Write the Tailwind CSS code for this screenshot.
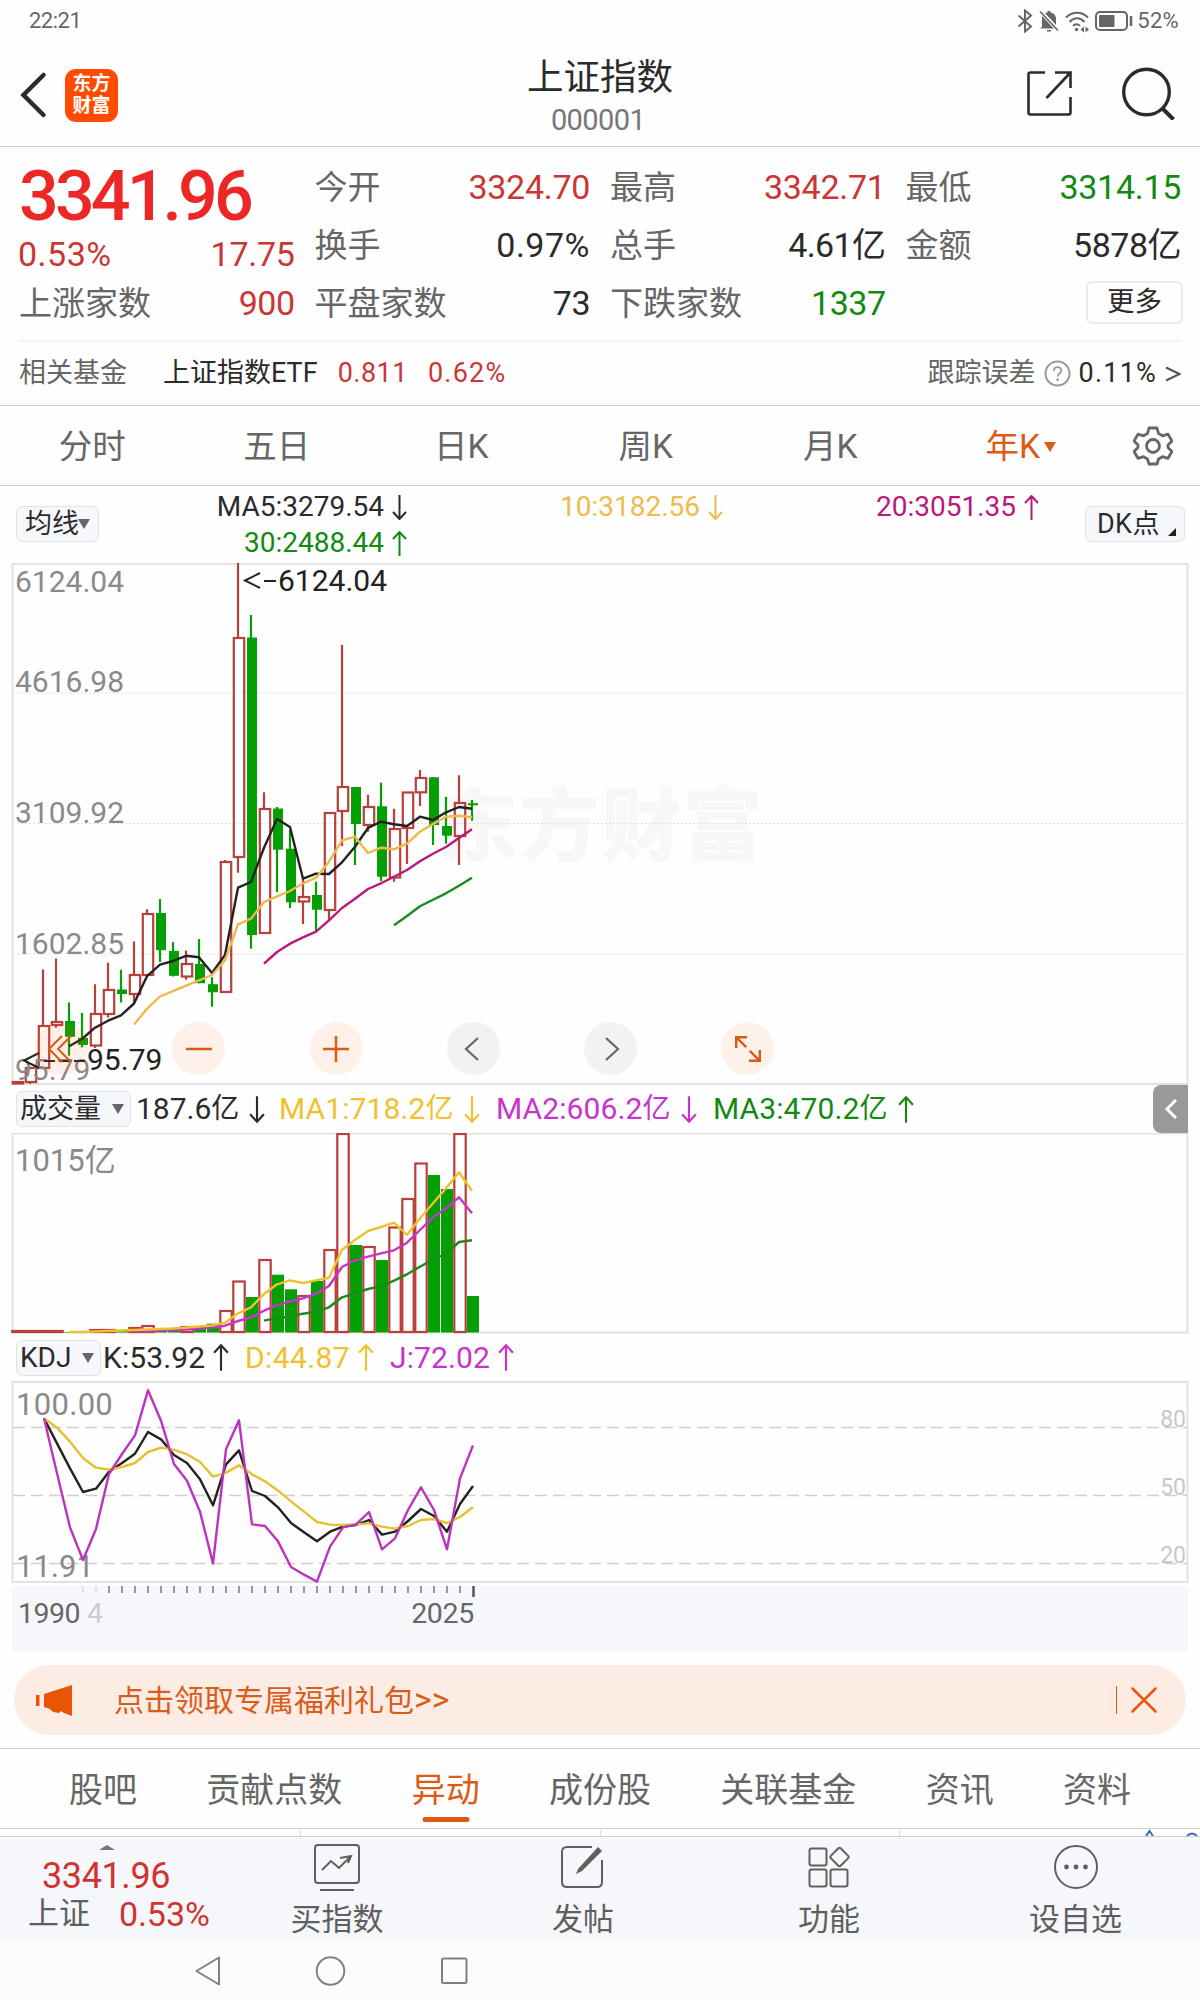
<!DOCTYPE html>
<html lang="zh-CN">
<head>
    <meta charset="UTF-8">
    <meta name="viewport" content="width=device-width, initial-scale=1.0">
    <title>上证指数 000001</title>
    <!-- Tailwind CSS -->
    <script src="https://cdn.jsdelivr.net/npm/@tailwindcss/browser@4"></script>
</head>
<body class="w-[1200px] h-[2000px] overflow-hidden bg-[#fefefe] font-[Roboto,'Noto_Sans_CJK_SC',sans-serif] text-[#2b2b2b] leading-none">

    <!-- Status bar -->
    <div class="flex h-[42px] items-center justify-between pl-[29px] pr-[21px] text-[22px] text-[#666]">
        <span class="tracking-[-0.5px]">22:21</span>
        <div class="flex items-center">
            <svg class="mr-1.5 h-6 w-4" viewBox="0 0 16 24" fill="none" stroke="#666" stroke-width="2"><path d="M1.500 6.500 14 17.500 8 22.500V1.500L14 6.500 1.500 17.500"/></svg>
            <svg class="mr-1.5 h-6 w-5" viewBox="0 0 20 24"><path d="M3 18V10c0-4 2.500-6 5.500-6.500V2h3v1.500C14.500 4 17 6 17 10v8l2 1.500H1z" fill="#666"/><path d="M8 21h4v1.500H8z" fill="#666"/><path d="M1 2 20 22" stroke="#fefefe" stroke-width="4"/><path d="M1 2.500 19 21.500" stroke="#666" stroke-width="1.600"/></svg>
            <svg class="mr-1.5 h-6 w-6" viewBox="0 0 24 24" fill="none" stroke="#666" stroke-width="2"><path d="M1 8.500c6-6.500 16-6.500 22 0M4.500 13c4.500-5 10.500-5 15 0M8 17c2-2.500 5-2.500 7 0"/><circle cx="11.500" cy="20.500" r="1.700" fill="#666" stroke="none"/><path d="M15.500 20.500l3.500-3v6zM24 20.500l-3.500-3v6z" fill="#666" stroke="none"/></svg>
            <svg class="mr-1 h-[22px] w-[38px]" viewBox="0 0 38 22"><rect x="1" y="2" width="31" height="18" rx="4" fill="none" stroke="#666" stroke-width="2"/><rect x="4" y="5" width="15.500" height="12" rx="1" fill="#666"/><path d="M36 6v10" stroke="#666" stroke-width="2.500"/></svg>
            <span class="tracking-[0.3px]">52%</span>
        </div>
    </div>

    <!-- Header -->
    <div class="flex h-[105px] items-center border-b border-[#cfcfcf] px-5">
        <div class="flex w-[400px] items-center pt-0.5">
            <svg class="h-[50px] w-[27px]" viewBox="0 0 27 50" fill="none" stroke="#2b2b2b" stroke-width="4.500" stroke-linecap="round"><path d="M23.500 5 3.500 25l20 20"/></svg>
            <div class="ml-[18px] flex h-[53px] w-[53px] flex-col items-center justify-center rounded-[11px] bg-[#ff4a00] text-[19px] font-bold leading-[22px] text-white">
                <span>东方</span>
                <span>财富</span>
            </div>
        </div>
        <div class="flex flex-1 flex-col items-center pt-1">
            <h1 class="text-[36.5px] leading-[48px]">上证指数</h1>
            <p class="-translate-x-0.5 leading-[36px] text-[29px] tracking-[-0.6px] text-[#777]">000001</p>
        </div>
        <div class="flex w-[400px] items-center justify-end pb-0.5 pr-[5px]">
            <svg class="mr-[48px] h-[47px] w-[47px]" viewBox="0 0 47 47" fill="none" stroke="#2b2b2b" stroke-width="2.600"><path d="M19 2.500H4.500q-2 0-2 2v38q0 2 2 2h38q2 0 2-2V27M29 2.500h15.500V18M44.500 2.500 20.500 28"/></svg>
            <svg class="h-[54px] w-[54px]" viewBox="0 0 54 54" fill="none" stroke="#2b2b2b" stroke-width="3.400"><circle cx="25.500" cy="26" r="22.800"/><path d="M41.500 42.500l11 11" stroke-width="4"/></svg>
        </div>
    </div>

    <!-- Quote summary -->
    <div class="px-[19px] pt-[11px]">
        <div class="grid grid-cols-4 gap-x-5 text-[33px]">
            <div>
                <div class="flex h-[74px] items-center pt-px text-[70px] font-medium tracking-[-3.900px] text-[#ec2726]">3341.96</div>
                <div class="flex h-[42px] items-center justify-between pt-0.5 text-[34px] text-[#cb3634]"><span class="-ml-px tracking-[0.500px]">0.53%</span><span class="tracking-[-0.300px]">17.75</span></div>
                <div class="flex h-[58px] items-center justify-between"><span class="text-[#666]">上涨家数</span><span class="text-[34px] tracking-[-0.500px] text-[#cb3634]">900</span></div>
            </div>
            <div>
                <div class="flex h-[58px] items-center justify-between"><span class="text-[#666]">今开</span><span class="text-[34px] tracking-[-0.3px] text-[#cb3634]">3324.70</span></div>
                <div class="flex h-[58px] items-center justify-between"><span class="text-[#666]">换手</span><span class="text-[34px] tracking-[0.500px]">0.97%</span></div>
                <div class="flex h-[58px] items-center justify-between"><span class="text-[#666]">平盘家数</span><span class="text-[34px] tracking-[-0.500px]">73</span></div>
            </div>
            <div>
                <div class="flex h-[58px] items-center justify-between"><span class="text-[#666]">最高</span><span class="text-[34px] tracking-[-0.3px] text-[#cb3634]">3342.71</span></div>
                <div class="flex h-[58px] items-center justify-between"><span class="text-[#666]">总手</span><span class="text-[34px] tracking-[-0.6px]">4.61亿</span></div>
                <div class="flex h-[58px] items-center justify-between"><span class="text-[#666]">下跌家数</span><span class="text-[34px] tracking-[-0.500px] text-[#118a11]">1337</span></div>
            </div>
            <div>
                <div class="flex h-[58px] items-center justify-between"><span class="text-[#666]">最低</span><span class="text-[34px] tracking-[-0.3px] text-[#118a11]">3314.15</span></div>
                <div class="flex h-[58px] items-center justify-between"><span class="text-[#666]">金额</span><span class="text-[34px] tracking-[-0.500px]">5878亿</span></div>
                <div class="flex h-[58px] items-center justify-end"><button class="-mr-0.5 -mt-0.5 h-[43px] w-[97px] rounded-md border-2 border-[#ebebeb] text-[27.500px] leading-none">更多</button></div>
            </div>
        </div>
        <div class="mt-2 flex h-[65px] items-center border-t-2 border-[#f3f3f3] text-[27px]">
            <span class="text-[#666]">相关基金</span>
            <span class="ml-9">上证指数ETF</span>
            <span class="ml-5 tracking-[0.500px] text-[#cb3634]">0.811</span>
            <span class="ml-5 tracking-[1.200px] text-[#cb3634]">0.62%</span>
            <span class="ml-auto text-[#666]">跟踪误差</span>
            <svg class="ml-2 h-[27px] w-[27px]" viewBox="0 0 27 27"><circle cx="13.500" cy="13.500" r="12" fill="none" stroke="#999" stroke-width="2"/><path d="M9.800 11c0-5 7.600-5 7.600-.5 0 3-3.700 2.700-3.700 6" fill="none" stroke="#999" stroke-width="1.800"/><circle cx="13.700" cy="19.800" r="1.300" fill="#999"/></svg>
            <span class="ml-2 tracking-[1.200px]">0.11%</span>
            <svg class="ml-2 h-4 w-4" viewBox="0 0 16 16" fill="none" stroke="#555" stroke-width="2"><path d="M1 1.500 14.500 8 1 14.500"/></svg>
        </div>
    </div>

    <!-- Period tabs -->
    <div class="flex h-[81px] items-center border-y border-[#cfcfcf] pt-0.5 text-[33.5px] text-[#666]">
        <span class="w-[184.5px] text-center">分时</span>
        <span class="w-[184.5px] text-center">五日</span>
        <span class="w-[184.5px] text-center">日K</span>
        <span class="w-[184.5px] text-center">周K</span>
        <span class="w-[184.5px] text-center">月K</span>
        <span class="flex w-[184.5px] items-center justify-center pl-3 text-[#dd5a12]">年K<svg class="ml-1 h-3 w-3" viewBox="0 0 12 12"><path d="M0 1h12L6 11z" fill="#dd5a12"/></svg></span>
        <div class="-mt-0.5 flex flex-1 justify-center pr-0.5">
            <svg class="h-10 w-10" viewBox="0 0 40 40" fill="none" stroke="#666" stroke-width="2.800" stroke-linejoin="round"><path d="M16 2h8l1.500 5.500 4 2.300 5.500-1.600 4 6.800-4 4v2.500l4 4-4 6.800-5.500-1.600-4 2.300L24 38h-8l-1.500-5-4-2.300L5 32.300l-4-6.800 4-4V19l-4-4 4-6.800 5.500 1.600 4-2.300z"/><circle cx="20" cy="20" r="6.500"/></svg>
        </div>
    </div>

    <!-- Moving average legend -->
    <div class="flex h-[77px] pl-4 text-[28px]">
        <button class="mt-5 flex h-9 w-[83px] items-center justify-center rounded-md border border-[#dfe3e8] bg-[#f6f7fb] text-[27px]">均线<svg class="-ml-px h-[10px] w-3" viewBox="0 0 12 10"><path d="M0 0h12L6 10z" fill="#666"/></svg></button>
        <div class="grid grid-cols-[308px_316px_316px] content-start justify-items-end pt-[3px]">
            <span class="flex h-9 items-center">MA5:3279.54<svg class="ml-2 h-[25px] w-[15px]" viewBox="0 0 15 25" fill="none" stroke="currentColor" stroke-width="2"><path d="M7.500 0v24M1 17l6.500 7 6.500-7"/></svg></span>
            <span class="flex h-9 items-center text-[#eebb4d]">10:3182.56<svg class="ml-2 h-[25px] w-[15px]" viewBox="0 0 15 25" fill="none" stroke="currentColor" stroke-width="2"><path d="M7.500 0v24M1 17l6.500 7 6.500-7"/></svg></span>
            <span class="flex h-9 items-center text-[#b8197a]">20:3051.35<svg class="ml-2 h-[25px] w-[15px]" viewBox="0 0 15 25" fill="none" stroke="currentColor" stroke-width="2"><path d="M7.500 25V1M1 8l6.500-7L14 8"/></svg></span>
            <span class="flex h-9 items-center text-[#118a11]">30:2488.44<svg class="ml-2 h-[25px] w-[15px]" viewBox="0 0 15 25" fill="none" stroke="currentColor" stroke-width="2"><path d="M7.500 25V1M1 8l6.500-7L14 8"/></svg></span>
        </div>
        <button class="ml-auto mr-[15px] mt-5 flex h-9 w-[100px] items-center rounded-md border border-[#dfe3e8] bg-[#f6f7fb] pl-[11px] text-[27px]"><span class="tracking-[0.400px]">DK点</span><svg class="ml-2 mt-4 h-2 w-2" viewBox="0 0 8 8"><path d="M8 0v8H0z" fill="#222"/></svg></button>
    </div>

    <!-- Candlestick chart -->
    <div class="relative h-[522px]">
        <svg id="kline" class="block h-full w-full" viewBox="0 563 1200 522"></svg>
        <div class="absolute left-[35px] top-[459px] flex gap-[84.3px]">
            <span class="flex size-[53px] items-center justify-center rounded-full bg-[#fd7a30]/10"><svg class="-ml-1 size-7" viewBox="0 0 28 28" fill="none" stroke="#dd5a12" stroke-width="2"><path d="M16 1 3 14l13 13M25 1 12 14l13 13"/></svg></span>
            <span class="flex size-[53px] items-center justify-center rounded-full bg-[#fef1ea]"><svg class="size-[26px]" viewBox="0 0 26 26" stroke="#dd5a12" stroke-width="2.500"><path d="M0 13h26"/></svg></span>
            <span class="flex size-[53px] items-center justify-center rounded-full bg-[#fef1ea]"><svg class="size-[26px]" viewBox="0 0 26 26" stroke="#dd5a12" stroke-width="2.500"><path d="M0 13h26M13 0v26"/></svg></span>
            <span class="flex size-[53px] items-center justify-center rounded-full bg-[#f2f2f2]"><svg class="-ml-0.5 size-6" viewBox="0 0 24 24" fill="none" stroke="#666" stroke-width="2.200"><path d="M18 1 6 12l12 11"/></svg></span>
            <span class="flex size-[53px] items-center justify-center rounded-full bg-[#f2f2f2]"><svg class="ml-0.5 size-6" viewBox="0 0 24 24" fill="none" stroke="#666" stroke-width="2.200"><path d="M6 1 18 12 6 23"/></svg></span>
            <span class="flex size-[53px] items-center justify-center rounded-full bg-[#fef1ea]"><svg class="size-[26px]" viewBox="0 0 26 26" fill="none" stroke="#dd5a12" stroke-width="2.400"><path d="M12 1.200H1.200V12M1.200 1.200l10 10M14 24.800h10.800V14M24.800 24.800l-10-10"/></svg></span>
        </div>
    </div>

    <!-- Volume legend -->
    <div class="flex h-[48px] items-center pl-4 text-[30px]">
        <button class="flex h-9 w-[115px] items-center rounded-md border border-[#dfe3e8] bg-[#f6f7fb] pl-[3px] text-[27px]">成交量<svg class="ml-[11px] h-[10px] w-3" viewBox="0 0 12 10"><path d="M0 0h12L6 10z" fill="#666"/></svg></button>
        <span class="ml-[5px] flex w-[143px] items-center">187.6<span class="text-[28px]">亿</span><svg class="ml-2.5 h-[27px] w-4" viewBox="0 0 15 25" fill="none" stroke="currentColor" stroke-width="2"><path d="M7.500 0v24M1 17l6.500 7 6.500-7"/></svg></span>
        <span class="flex w-[217px] items-center tracking-[0.100px] text-[#efc12e]">MA1:718.2<span class="text-[28px]">亿</span><svg class="ml-2.5 h-[27px] w-4" viewBox="0 0 15 25" fill="none" stroke="currentColor" stroke-width="2"><path d="M7.500 0v24M1 17l6.500 7 6.500-7"/></svg></span>
        <span class="flex w-[217px] items-center tracking-[0.100px] text-[#c733cb]">MA2:606.2<span class="text-[28px]">亿</span><svg class="ml-2.5 h-[27px] w-4" viewBox="0 0 15 25" fill="none" stroke="currentColor" stroke-width="2"><path d="M7.500 0v24M1 17l6.500 7 6.500-7"/></svg></span>
        <span class="flex items-center tracking-[0.100px] text-[#118a11]">MA3:470.2<span class="text-[28px]">亿</span><svg class="ml-2.5 h-[27px] w-4" viewBox="0 0 15 25" fill="none" stroke="currentColor" stroke-width="2"><path d="M7.500 25V1M1 8l6.500-7L14 8"/></svg></span>
        <span class="ml-auto mr-3 flex h-[48px] w-[35px] items-center justify-center rounded-l-lg bg-[#999]"><svg class="h-5 w-3" viewBox="0 0 12 20" fill="none" stroke="#fff" stroke-width="3"><path d="M11 1 2 10l9 9"/></svg></span>
    </div>

    <!-- Volume chart -->
    <svg id="volume" class="block h-[201px] w-full" viewBox="0 1133 1200 201"></svg>

    <!-- KDJ legend -->
    <div class="flex h-[47px] items-center pl-4 text-[30px]">
        <button class="flex h-9 w-[85px] items-center rounded-md border border-[#dfe3e8] bg-[#f6f7fb] pl-[3px] text-[28px]">KDJ<svg class="ml-[11px] h-[10px] w-3" viewBox="0 0 12 10"><path d="M0 0h12L6 10z" fill="#666"/></svg></button>
        <span class="ml-0.5 flex w-[142px] items-center tracking-[0.100px]">K:53.92<svg class="ml-2 h-[27px] w-4" viewBox="0 0 15 25" fill="none" stroke="currentColor" stroke-width="2"><path d="M7.500 25V1M1 8l6.500-7L14 8"/></svg></span>
        <span class="flex w-[145px] items-center tracking-[0.400px] text-[#efc12e]">D:44.87<svg class="ml-2 h-[27px] w-4" viewBox="0 0 15 25" fill="none" stroke="currentColor" stroke-width="2"><path d="M7.500 25V1M1 8l6.500-7L14 8"/></svg></span>
        <span class="flex items-center tracking-[0.100px] text-[#c733cb]">J:72.02<svg class="ml-2 h-[27px] w-4" viewBox="0 0 15 25" fill="none" stroke="currentColor" stroke-width="2"><path d="M7.500 25V1M1 8l6.500-7L14 8"/></svg></span>
    </div>

    <!-- KDJ chart and year axis -->
    <svg id="kdj" class="block h-[270px] w-full" viewBox="0 1381 1200 270"></svg>

    <!-- Promo banner -->
    <div class="mx-3.5 mt-3.5 flex h-[70px] items-center rounded-[36px] bg-[#fcece3] pl-[22px] pr-[29px] text-[30px] text-[#d95c1a]">
        <svg class="h-[31px] w-9" viewBox="0 0 36 31" fill="#e95504"><path d="M0 10h3.500v11H0zM8 9 36 0v31l-8-3-3-2-2 2-6-1-3-3-6-2z"/></svg>
        <span class="ml-[42px] -mt-0.5">点击领取专属福利礼包<span class="text-[34px] leading-none">&gt;&gt;</span></span>
        <span class="ml-auto h-7 w-px bg-[#c9611f]"></span>
        <svg class="ml-3.5 h-[26px] w-[26px]" viewBox="0 0 26 26" stroke="#dd5a12" stroke-width="2.500" stroke-linecap="round"><path d="M1.500 1.500l23 23M24.500 1.500l-23 23"/></svg>
    </div>

    <!-- Content tabs -->
    <div class="mt-[13px] flex h-[81px] items-center justify-between border-y border-[#cfcfcf] px-[69px] pt-0.5 text-[34px] text-[#666]">
        <span>股吧</span>
        <span>贡献点数</span>
        <span class="relative text-[#dd5a12]">异动<i class="absolute -bottom-[15px] left-1/2 h-[5px] w-[47px] -translate-x-1/2 rounded-full bg-[#dd5a12]"></i></span>
        <span>成份股</span>
        <span>关联基金</span>
        <span>资讯</span>
        <span>资料</span>
    </div>
    <svg class="block h-[7px] w-full" viewBox="0 0 1200 7" fill="none"><path d="M300.500 2v5M600.500 2v5M899.500 2v5" stroke="#ccc" stroke-dasharray="2 1.500"/><path d="M1146 7l3.500-5 3.500 5M1187 7q5-5 10 0" stroke="#3c6fae" stroke-width="2"/></svg>

    <!-- Bottom toolbar -->
    <div class="flex h-[106px] border-t border-[#cfcfcf] bg-[#f6f7fb] text-[31px] text-[#5f5f5f]">
        <div class="w-[214px]">
            <svg class="ml-[99px] mt-2 h-[5px] w-4" viewBox="0 0 16 5"><path d="M0 5 8 0l8 5z" fill="#777"/></svg>
            <p class="ml-[42px] mt-2 text-[36px] leading-[36px] tracking-[-0.400px] text-[#d13232]">3341.96</p>
            <p class="ml-[28px] mt-0.5 flex items-center leading-[36px]">上证<span class="ml-[29px] text-[34px] tracking-[-0.100px] text-[#d13232]">0.53%</span></p>
        </div>
        <div class="flex w-[246px] flex-col items-center pt-[7px]">
            <svg class="h-[48px] w-[48px]" viewBox="0 0 48 48" fill="none" stroke="#5f5f5f" stroke-width="2"><rect x="2" y="1" width="44" height="38" rx="3"/><path d="M7 46h34M9 26l9-9 8 7 11-11M27 14l11-2-3 7"/></svg>
            <span class="mt-3">买指数</span>
        </div>
        <div class="flex w-[246px] flex-col items-center pt-[7px]">
            <svg class="h-[48px] w-[48px]" viewBox="0 0 48 48" fill="none" stroke="#5f5f5f" stroke-width="2"><path d="M33 3H8q-5 0-5 5v30q0 5 5 5h30q5 0 5-5V16"/><path d="M17 30l2-5L39 3l4 4-20 20z" fill="#5f5f5f" stroke="none"/></svg>
            <span class="mt-3">发帖</span>
        </div>
        <div class="flex w-[246px] flex-col items-center pt-[7px]">
            <svg class="h-[48px] w-[48px]" viewBox="0 0 48 48" fill="none" stroke="#5f5f5f" stroke-width="2"><rect x="4.500" y="4.500" width="17" height="17" rx="2"/><rect x="4.500" y="25.500" width="17" height="17" rx="2"/><rect x="25.500" y="25.500" width="17" height="17" rx="2"/><rect x="27.500" y="6" width="14" height="14" rx="2" transform="rotate(45 34.500 13)"/></svg>
            <span class="mt-3">功能</span>
        </div>
        <div class="flex w-[247px] flex-col items-center pt-[7px]">
            <svg class="h-[48px] w-[48px]" viewBox="0 0 48 48" fill="none" stroke="#5f5f5f" stroke-width="2"><circle cx="24" cy="23" r="21"/><g fill="#5f5f5f" stroke="none"><circle cx="14.500" cy="23" r="2.400"/><circle cx="24" cy="23" r="2.400"/><circle cx="33.500" cy="23" r="2.400"/></g></svg>
            <span class="mt-3">设自选</span>
        </div>
    </div>

    <!-- System navigation -->
    <div class="flex h-[58px] items-center bg-[#fcfcfc] pl-[195px]">
        <svg class="h-[30px] w-[273px]" viewBox="0 0 273 30" fill="none" stroke="#808080" stroke-width="2"><path d="M24 1.500v27L1.500 15z" stroke-linejoin="round"/><circle cx="135.500" cy="15" r="13.800"/><rect x="247" y="2.500" width="24.500" height="24.500" rx="1.500"/></svg>
    </div>

    <script>
        const RED = '#b8403a', GREEN = '#049f04', BLACK = '#222', STEP = 13, X0 = 17;
        const x = i => X0 + i * STEP;

        // [up/down, high, body top, body bottom, low]
        const candles = [
            ['r', 1082, 1082, 1083.5, 1083.5], ['r', 1068, 1068, 1082, 1084], ['r', 969.5, 1026, 1068, 1068],
            ['r', 958.6, 1022, 1025, 1027.7], ['g', 1002.5, 1021, 1036.8, 1055.8], ['g', 1013, 1037.9, 1044.9, 1047.4],
            ['r', 984.2, 1014, 1045.5, 1048], ['r', 962.8, 990, 1014, 1017.5], ['g', 969.8, 989.5, 994, 1002.5],
            ['r', 941.4, 975, 994, 1002.5], ['r', 909.2, 914, 975, 975], ['g', 899, 913, 950.2, 962.1],
            ['g', 942.1, 950.9, 975.8, 976.5], ['r', 950.6, 964, 976.5, 979.7], ['g', 939, 963.9, 983.2, 983.2],
            ['g', 977.2, 984.2, 992.3, 1006.7], ['r', 860, 862, 992, 992], ['r', 563, 638, 857, 872.7],
            ['g', 615, 637.5, 935, 948.8], ['r', 792.3, 809, 933, 933], ['g', 807, 808.5, 849.7, 892],
            ['g', 830, 848.7, 902.3, 908], ['r', 878.3, 897, 901.5, 924], ['g', 881.7, 895, 909.7, 931.7],
            ['r', 813, 813, 910, 920.7], ['r', 645, 787, 811, 846], ['g', 787, 787, 824, 865],
            ['r', 794.7, 807, 825, 831.7], ['g', 782.7, 806.3, 876.7, 881], ['r', 808.7, 829, 877.5, 881.7],
            ['r', 792.3, 792.5, 828, 864], ['r', 770, 778, 792.3, 806], ['g', 777, 777.3, 825, 845],
            ['g', 797, 826, 835.7, 843.7], ['r', 775.3, 803, 836, 865], ['g', 800, 803.2, 805.2, 820.7]
        ];
        const ma5 = [1046.3, 1039, 1027.7, 1020.7, 1015.4, 1003.5, 976.2, 964.6, 961, 955.8, 957.2, 973, 955, 887.7, 882, 847.7, 819, 827, 878.7, 873.7, 874, 862.3, 846.7, 828, 821.7, 824.3, 826, 816.7, 820, 812.3, 807, 808.7];
        const ma10 = [1024.6, 1008.8, 996.5, 991.2, 985.6, 980.4, 975, 960.4, 924.3, 918.7, 902, 896.3, 891, 883.3, 877.7, 861.7, 840.3, 836.7, 853, 847.7, 849.3, 843.7, 831.7, 824, 816.7, 815.7, 817.3];
        const ma20 = [963.7, 952, 943.7, 937.3, 931.7, 920.3, 908, 898.7, 889, 883.3, 876.7, 870, 861.3, 853.7, 847, 838, 829.3];
        const ma30 = [925.3, 916, 906.3, 899.7, 893.3, 885.7, 877.7];

        const volTops = [1331, 1331, 1331, 1331, 1332, 1332, 1330, 1330, 1331, 1328, 1326, 1328, 1329, 1327, 1326, 1323.7, 1311, 1281.5, 1297, 1260, 1274.7, 1289.3, 1296, 1281, 1250, 1134, 1245, 1247, 1260, 1227.5, 1199, 1163.5, 1175, 1189, 1134, 1296];
        const vol5 = [1332, 1332, 1331.5, 1331, 1330.5, 1330, 1329.5, 1329, 1328.5, 1327.5, 1326.5, 1325.5, 1322.7, 1313.3, 1307.3, 1294, 1284.3, 1280.3, 1283, 1280.3, 1277.7, 1249.7, 1240, 1231, 1227, 1222.7, 1235, 1218.3, 1203.3, 1188.3, 1172.3, 1190.7];
        const vol10 = [1331, 1331, 1330.5, 1330, 1329.5, 1328.5, 1327.5, 1325.7, 1321, 1317.3, 1310.7, 1305.3, 1301.7, 1298.3, 1293.7, 1286, 1267, 1260.3, 1256.7, 1253.3, 1250.3, 1242.7, 1230, 1217.3, 1208.3, 1197.3, 1213.3];
        const vol20 = [1320.7, 1318, 1316.7, 1313.7, 1311.7, 1307.3, 1297.3, 1293.3, 1289, 1286.3, 1280.7, 1274.3, 1266.7, 1259.3, 1254, 1242, 1240.3];

        const k = [265, 340, 415, 486, 476, 425, 399, 371, 306, 328, 375, 399, 448, 526, 403, 361, 483, 498, 532, 579, 607, 634, 605, 590, 585, 570, 614, 605, 573, 537, 558, 605, 522, 468];
        const d = [265, 293, 335, 384, 413, 419, 411, 399, 366, 353, 359, 373, 396, 440, 428, 406, 433, 454, 482, 514, 545, 576, 584, 585, 583, 580, 590, 596, 588, 570, 567, 579, 561, 531];
        const j = [265, 430, 592, 690, 597, 432, 372, 316, 181, 272, 402, 452, 545, 700, 358, 271, 583, 588, 634, 711, 734, 755, 650, 592, 583, 546, 658, 625, 540, 472, 540, 658, 445, 346];

        // Series are right-aligned: the last value always belongs to 2025
        const line = (ys, color, dx = 0) =>
            `<polyline fill="none" stroke="${color}" stroke-width="2.4" stroke-linejoin="round" points="${ys.map((y, i) => `${x(36 - ys.length + i) + dx},${y}`).join(' ')}"/>`;
        const text = (tx, ty, s, color, size = 30, extra = '') =>
            `<text x="${tx}" y="${ty}" fill="${color}" font-size="${size}" ${extra}>${s}</text>`;
        const frame = (top, bottom) =>
            `<rect x="12.5" y="${top}" width="1175" height="${bottom - top}" fill="none" stroke="#e2e2e2" stroke-width="2"/>`;

        // K-line panel
        let out = text(438, 854, '东方财富', '#f7f7f7', 80, 'font-weight="900" letter-spacing="1.5"');
        out += frame(563.7, 1084);
        [693, 823.5, 954].forEach(y => out += `<path d="M13 ${y}H1187" stroke="#dedede" stroke-dasharray="2 2"/>`);
        candles.forEach(([c, hi, top, bot, lo], i) => {
            const color = c === 'r' ? RED : GREEN;
            if (c === 'r') {
                out += `<path d="M${x(i)} ${hi}V${top}M${x(i)} ${bot}V${lo}" stroke="${color}" stroke-width="2.2"/>`;
                out += `<rect x="${x(i) - 4.2}" y="${top}" width="10.4" height="${bot - top}" fill="none" stroke="${color}" stroke-width="2.2"/>`;
            } else {
                out += `<path d="M${x(i)} ${hi}V${lo}" stroke="${color}" stroke-width="2.2"/>`;
                out += `<rect x="${x(i) - 4}" y="${top}" width="10" height="${bot - top}" fill="${color}"/>`;
            }
        });
        out += line(ma5, BLACK) + line(ma10, '#f0b84a') + line(ma20, '#b8197a') + line(ma30, '#1d8a1d');
        out += text(15, 592, '6124.04', '#8a8a8a') + text(15, 692, '4616.98', '#8a8a8a') + text(15, 823, '3109.92', '#8a8a8a') + text(15, 954, '1602.85', '#8a8a8a') + text(15, 1080, '95.79', '#8a8a8a');
        out += text(278, 590.5, '6124.04', BLACK) + text(87, 1070, '95.79', BLACK);
        out += `<path d="M260 573l-15 7.5 15 7.5M264 581h12M39 1053l-15 7.5 15 7.5M44 1061h11M59 1061h11M74 1061h11" fill="none" stroke="${BLACK}" stroke-width="2"/>`;
        document.getElementById('kline').innerHTML = out;

        // Volume panel
        out = frame(1133.5, 1332.5);
        volTops.forEach((top, i) => {
            out += candles[i][0] === 'r'
                ? `<rect x="${x(i) - 4.7}" y="${top}" width="11.4" height="${1332 - top}" fill="none" stroke="${RED}" stroke-width="2.2"/>`
                : `<rect x="${x(i) - 5}" y="${top}" width="12" height="${1332.5 - top}" fill="${GREEN}"/>`;
        });
        out += line(vol20, '#1d8a1d') + line(vol10, '#c733cb') + line(vol5, '#efc12e');
        out += text(15, 1171, '1015<tspan font-size="31">亿</tspan>', '#8a8a8a', 31);
        document.getElementById('volume').innerHTML = out;

        // KDJ panel, values are thirds of a pixel below y=1330
        const toY = v => 1330 + v / 3;
        out = frame(1382, 1582);
        [[80, 1427.5], [50, 1495.5], [20, 1563.5]].forEach(([label, y]) => {
            out += `<path d="M13 ${y}H1187" stroke="#cfcfcf" stroke-width="1.3" stroke-dasharray="12 6"/>`;
            out += text(1186, y - 1, label, '#c8c8c8', 23, 'text-anchor="end"');
        });
        out += text(16, 1415, '100.00', '#8a8a8a', 31, 'letter-spacing="0.3"') + text(16, 1577, '11.91', '#8a8a8a', 31);
        out += line(k.map(toY), BLACK, 1) + line(d.map(toY), '#e6c02e', 1) + line(j.map(toY), '#bb33bf', 1);
        out += '<rect x="12" y="1586" width="1176" height="65" fill="#f6f7fb"/>';
        for (let i = 5; i < 35; i++) out += `<path d="M${x(i) + 1} 1586v7" stroke="${i < 7 ? '#d4d4d4' : '#666'}" stroke-width="1.3"/>`;
        out += '<path d="M473.5 1586v11" stroke="#555" stroke-width="2.5"/>';
        out += text(18, 1622.5, '1990', '#666', 28.5, 'letter-spacing="-0.5"') + text(87, 1622.5, '4', '#ccc', 28.5) + text(474, 1622.5, '2025', '#666', 28.5, 'text-anchor="end" letter-spacing="-0.3"');
        document.getElementById('kdj').innerHTML = out;
    </script>
</body>
</html>
